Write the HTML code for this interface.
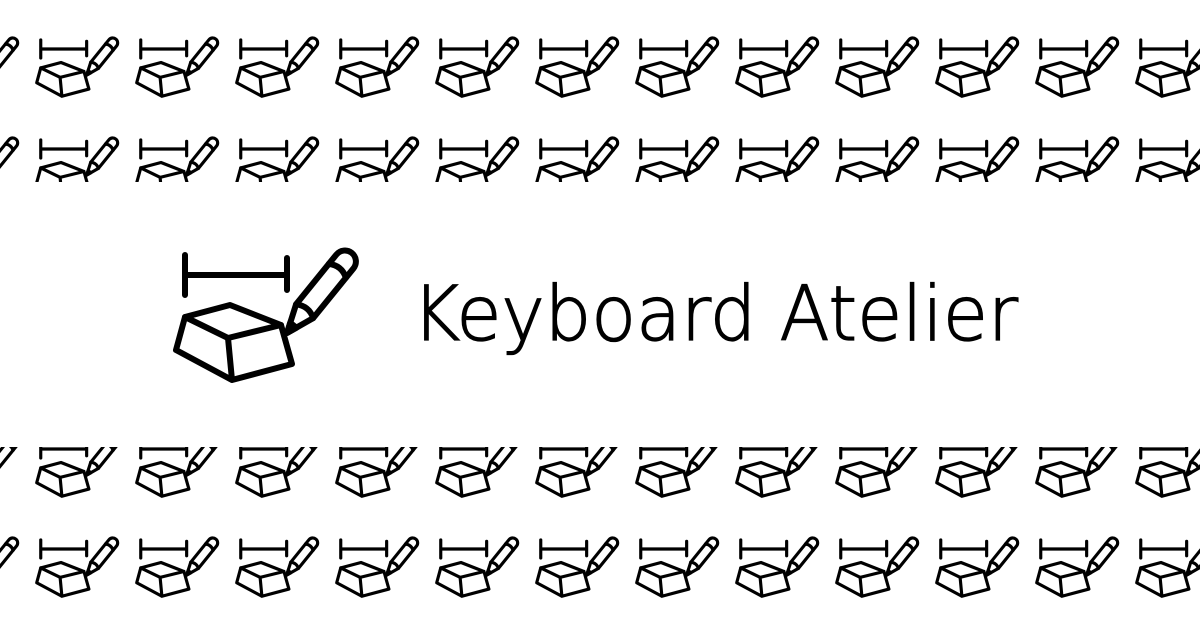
<!DOCTYPE html>
<html><head><meta charset="utf-8"><style>
html,body{margin:0;padding:0;background:#fff;width:1200px;height:630px;overflow:hidden}
</style></head><body>
<svg width="1200" height="630" viewBox="0 0 1200 630" xmlns="http://www.w3.org/2000/svg">
<defs>
<g id="shape">
  <path d="M15 20 L15 60 M15 40 L117 40 M117 23 L117 55"/>
  <path d="M15 82 L60 70 L111 90 L58 103 Z"/>
  <path d="M15 82 L6 115 L62 145 L122 129 L111 90 M58 103 L62 145"/>
  <g transform="translate(117 98) rotate(-51)">
    <path d="M0 0 L28 -11 L92 -11 A11 11 0 0 1 92 11 L28 11 Z" fill="#fff"/>
    <path d="M28 -11 Q35 0 28 11 M80 -11 Q87 0 80 11"/>
    <path d="M0 0 L10 -4 L10 4 Z" fill="#000"/>
  </g>
</g>
<g id="ic" fill="none" stroke="#000" stroke-width="6" stroke-linecap="round" stroke-linejoin="round"><use href="#shape"/></g>
<g id="ics" fill="none" stroke="#000" stroke-width="7" stroke-linecap="round" stroke-linejoin="round"><use href="#shape"/></g>
<pattern id="pt" x="34" y="31" width="100" height="100" patternUnits="userSpaceOnUse">
  <use href="#ics" transform="scale(0.45)"/>
  <use href="#ics" transform="translate(-100 0) scale(0.45)"/>
</pattern>
</defs>
<rect x="0" y="0" width="1200" height="182" fill="url(#pt)"/>
<rect x="0" y="447" width="1200" height="183" fill="url(#pt)"/>
<use href="#ic" transform="translate(170 235)"/>
<text x="412" y="340" font-family="DejaVu Sans, Liberation Sans, sans-serif" font-weight="200" font-size="76" textLength="606" lengthAdjust="spacingAndGlyphs" fill="#000" stroke="#000" stroke-width="1.3">Keyboard Atelier</text>
</svg>
</body></html>
